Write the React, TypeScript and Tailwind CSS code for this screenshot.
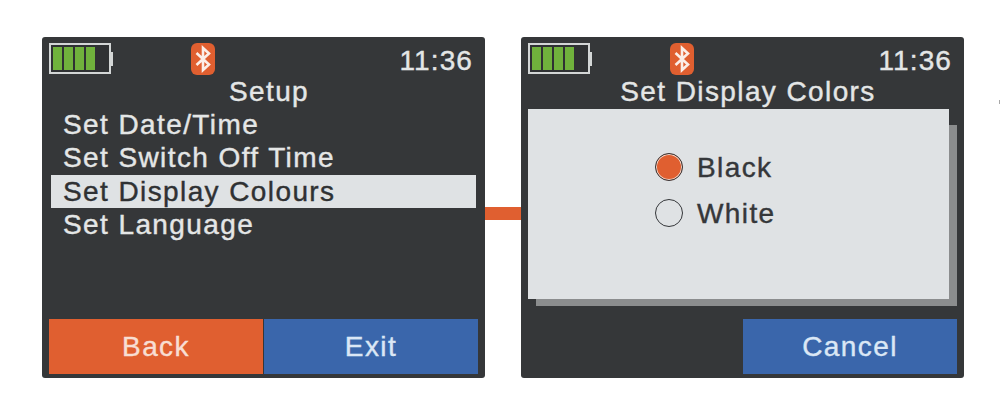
const FONT = "font-['Liberation_Sans',Arial,sans-serif]";

function Battery() {
  return (
    <div className="flex items-center self-start">
      <div className="flex h-[31px] w-[62px] gap-[2px] border-2 border-[#d3d6d6] bg-[#2f3133] py-[2px] pl-[2px]">
        <div className="w-[9px] bg-[#70b23c]" />
        <div className="w-[9px] bg-[#70b23c]" />
        <div className="w-[9px] bg-[#70b23c]" />
        <div className="w-[9px] bg-[#70b23c]" />
      </div>
      <div className="h-[14px] w-[2px] bg-[#d3d6d6]" />
    </div>
  );
}

function BluetoothBadge() {
  return (
    <svg width="24" height="32" viewBox="0 0 24 32" className="block">
      <rect width="24" height="32" rx="6" fill="#e05f30" />
      <path
        d="M5.5 10 L18 21.5 L12 27 L12 5 L18 10.5 L5.5 22"
        fill="none"
        stroke="#fbeee8"
        strokeWidth="2.6"
      />
    </svg>
  );
}

function StatusBar() {
  return (
    <div className="flex h-[32px] items-center">
      <Battery />
      <div className="ml-[78px]">
        <BluetoothBadge />
      </div>
      <span className="ml-auto mr-[5px] mt-[4px] text-[28px] leading-[32px] tracking-[1.1px] text-[#e4e6e6]">
        11:36
      </span>
    </div>
  );
}

function Title({ children }: { children: string }) {
  return (
    <div className="ml-[11px] h-[34px] text-center text-[28px] leading-[34px] tracking-[1.4px] text-[#e4e6e6]">
      {children}
    </div>
  );
}

function SetupScreen() {
  const items = ["Set Date/Time", "Set Switch Off Time", "Set Display Colours", "Set Language"];
  return (
    <div className="flex h-[341px] w-[443px] shrink-0 flex-col rounded-[3px] bg-[#353739] px-[7px] pb-[4px] pt-[6px]">
      <StatusBar />
      <Title>Setup</Title>
      <div className="mx-[2px] -mt-[1px] flex flex-col">
        {items.map((item) => (
          <div
            key={item}
            className={
              item === "Set Display Colours"
                ? "h-[33.4px] bg-[#dfe2e4] pl-[12px] text-[28px] leading-[34px] tracking-[1.4px] text-[#2f3133]"
                : "h-[33.4px] pl-[12px] text-[28px] leading-[34px] tracking-[1.4px] text-[#e4e6e6]"
            }
          >
            {item}
          </div>
        ))}
      </div>
      <div className="mt-auto flex h-[55px] gap-[1px]">
        <div className="flex w-[214px] items-center justify-center bg-[#e05f30] text-[28px] tracking-[1.4px] text-[#f8ded3]">
          Back
        </div>
        <div className="flex flex-1 items-center justify-center bg-[#3a66ab] text-[28px] tracking-[1.4px] text-[#dbe7f5]">
          Exit
        </div>
      </div>
    </div>
  );
}

function Radio({ label, selected }: { label: string; selected?: boolean }) {
  return (
    <div className="flex h-[46px] items-center gap-[14px]">
      <div
        className={
          selected
            ? "h-[28px] w-[28px] rounded-full border border-[#35373a] bg-[#e05f30] ring-1 ring-inset ring-[#f3d9cd]"
            : "h-[28px] w-[28px] rounded-full border border-[#35373a]"
        }
      />
      <span className="mt-[2px] text-[28px] tracking-[1.4px] text-[#35373a]">{label}</span>
    </div>
  );
}

function ColorsScreen() {
  return (
    <div className="flex h-[341px] w-[443px] shrink-0 flex-col rounded-[3px] bg-[#353739] px-[7px] pb-[4px] pt-[6px]">
      <StatusBar />
      <Title>Set Display Colors</Title>
      <div className="relative mr-[8px] h-[190px]">
        <div className="absolute bottom-[-7px] left-[8px] right-[-8px] top-[16px] bg-[#8b8d8e]" />
        <div className="relative flex h-full flex-col bg-[#dfe2e4] pl-[127px] pt-[35px]">
          <Radio label="Black" selected />
          <Radio label="White" />
        </div>
      </div>
      <div className="mt-auto flex h-[55px] justify-end">
        <div className="flex w-[214px] items-center justify-center bg-[#3a66ab] text-[28px] tracking-[1.4px] text-[#dbe7f5]">
          Cancel
        </div>
      </div>
    </div>
  );
}

export default function App() {
  return (
    <div className={`${FONT} relative flex h-[419px] w-[1000px] overflow-hidden bg-white pl-[42px] pt-[37px] [-webkit-text-stroke:0.4px_currentColor]`}>
      <SetupScreen />
      <div className="mt-[170px] h-[13px] w-[36px] shrink-0 bg-[#e05f30]" />
      <ColorsScreen />
      <div className="absolute left-[999px] top-[100px] h-[4px] w-[1px] bg-[#a8a8a8]" />
    </div>
  );
}
